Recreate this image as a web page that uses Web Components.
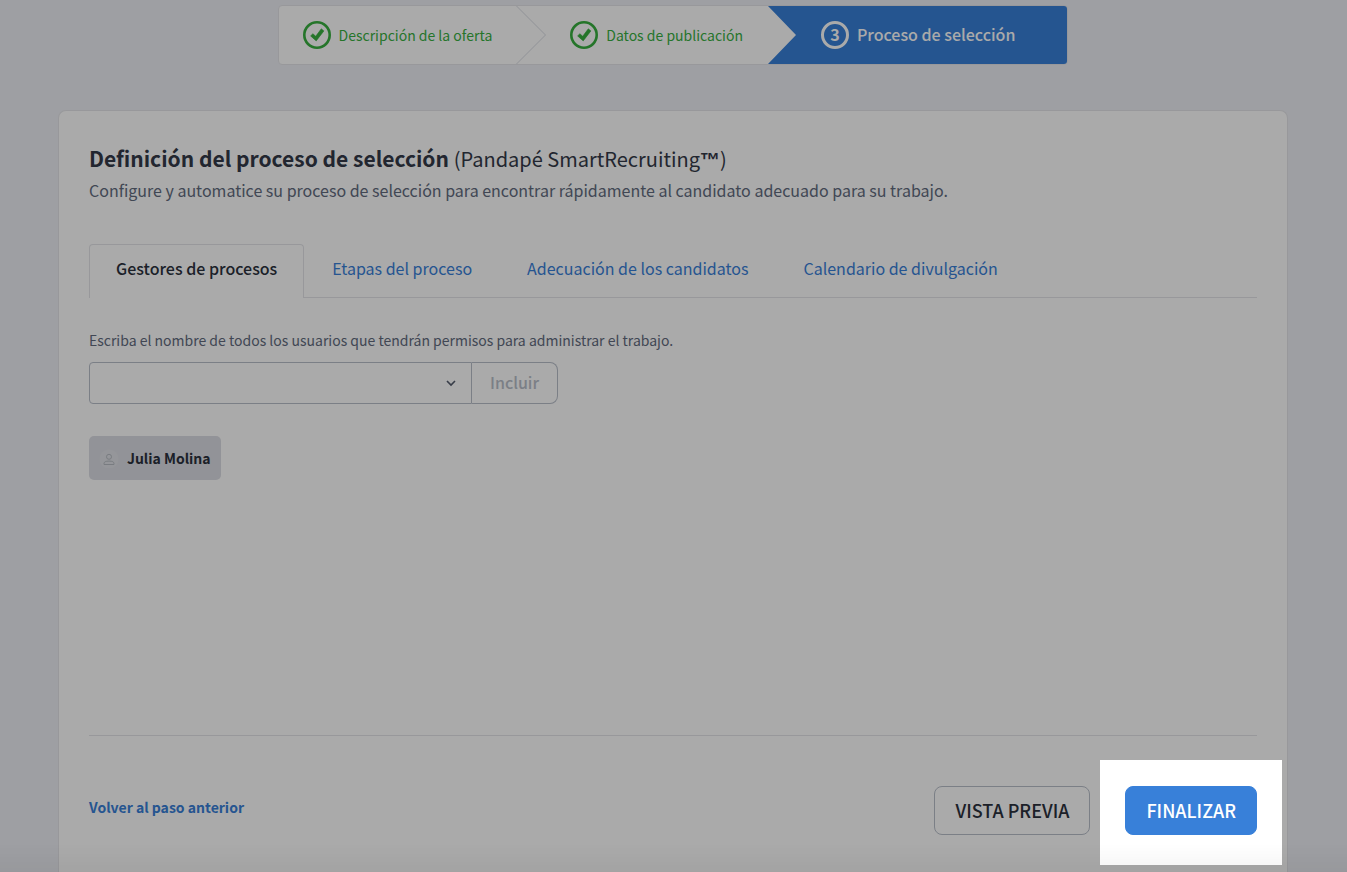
<!DOCTYPE html>
<html lang="es">
<head>
<meta charset="utf-8">
<meta name="viewport" content="width=device-width, initial-scale=1">
<title>Proceso de selección</title>
<style>
    body{
        margin:0;
        font-family:"Noto Sans CJK JP", "Noto Sans", sans-serif;
        font-size:14px;
        line-height:24px;
        color:#343a48;
        --blue:#3880d9;
        --green:#38b03f;
        --grey:#626b7e;
        --line:#e4e5e9;
        --field:#b9bfca;
        background-color:#eeeff5;
    }

    .trademark{
        font-family:"Liberation Sans", sans-serif;
        font-weight:700;
        line-height:1;
    }
</style>
</head>
<body>

<publish-page>
    <step-bar slot="steps">
        <step-item state="done">Descripción de la oferta</step-item>
        <step-item state="done" before-current>Datos de publicación</step-item>
        <step-item state="current" number="3">Proceso de selección</step-item>
    </step-bar>

    <process-card>
        <span slot="title">Definición del proceso de selección</span>
        <span slot="product">(Pandapé SmartRecruiting<span class="trademark">™</span>)</span>
        <span slot="intro">Configure y automatice su proceso de selección para encontrar rápidamente al candidato adecuado para su trabajo.</span>

        <tab-bar>
            <tab-item active>Gestores de procesos</tab-item>
            <tab-item>Etapas del proceso</tab-item>
            <tab-item>Adecuación de los candidatos</tab-item>
            <tab-item>Calendario de divulgación</tab-item>
        </tab-bar>
        <user-picker></user-picker>
        <user-chip>Julia Molina</user-chip>

        <card-actions slot="footer"></card-actions>
    </process-card>
</publish-page>

<script>
class PublishPage extends HTMLElement {

    constructor() {
        super();
        this.attachShadow({mode: 'open'});
        this.render();
    }

    render() {
        this.shadowRoot.innerHTML =
        /*html*/
        `
        <style>
            :host{
                display:flex;
                flex-direction:column;
                gap:45px;
                min-height:100vh;
                box-sizing:border-box;
                padding:5px 59px 0 58px;
            }

            main{
                flex:1;
                display:flex;
                flex-direction:column;
            }

            /* soft shade along the bottom of the window */
            .shade{
                position:fixed;
                left:0;
                right:0;
                bottom:0;
                height:28px;
                z-index:3;
                pointer-events:none;
                background:linear-gradient(rgba(0, 0, 0, 0), rgba(0, 0, 0, 0.04));
            }
        </style>

        <slot name="steps"></slot>
        <main><slot></slot></main>
        <div class="shade"></div>
        `;
    }
}

class StepBar extends HTMLElement {

    constructor() {
        super();
        this.attachShadow({mode: 'open'});
        this.render();
    }

    render() {
        this.shadowRoot.innerHTML =
        /*html*/
        `
        <style>
            :host{
                display:flex;
                justify-content:center;
            }

            nav{
                display:flex;
                height:58px;
                background-color:white;
                border:1px solid var(--line);
                border-radius:4px;
                overflow:hidden;
            }
        </style>

        <nav aria-label="Pasos"><slot></slot></nav>
        `;
    }
}

class StepItem extends HTMLElement {

    constructor() {
        super();
        this.attachShadow({mode: 'open'});
    }

    connectedCallback() {
        this.render();
    }

    icon() {
        if (this.getAttribute("state") === "current") {
            return `<span class="number">${this.getAttribute("number")}</span>`;
        }
        return `
            <svg class="check" viewBox="0 0 28 28" aria-hidden="true">
                <circle cx="14" cy="14" r="12.7" fill="none" stroke="currentColor" stroke-width="2.6"/>
                <path d="M7.6 14.9 L9.9 12.7 L12.7 15.3 L18.3 7.8 L20.9 9.9 L13.2 19.9 Z" fill="currentColor" stroke="currentColor" stroke-width="0.6" stroke-linejoin="round"/>
            </svg>`;
    }

    arrow() {
        if (this.getAttribute("state") === "current") {
            return "";
        }
        if (this.hasAttribute("before-current")) {
            return `
                <svg class="arrow" viewBox="0 0 30 58" preserveAspectRatio="none" aria-hidden="true">
                    <path d="M1 0 H30 V58 H1 L29 29 Z" fill="var(--blue)"/>
                </svg>`;
        }
        return `
            <svg class="arrow" viewBox="0 0 30 58" preserveAspectRatio="none" aria-hidden="true">
                <path d="M0.5 0 L29.5 29 L0.5 58" fill="none" stroke="#d9dce4"/>
            </svg>`;
    }

    render() {
        this.shadowRoot.innerHTML =
        /*html*/
        `
        <style>
            :host{
                display:flex;
                color:var(--green);
            }

            :host([state="current"]){
                background-color:var(--blue);
                color:white;
                font-size:16px;
                font-weight:500;
                padding-right:28px;
            }

            .content{
                display:flex;
                align-items:center;
                gap:8px;
                padding:0 24px;
            }

            :host([state="current"]) .label{
                padding-bottom:2px;
            }

            .check{
                width:28px;
                height:28px;
            }

            .number{
                box-sizing:border-box;
                width:28px;
                height:28px;
                border:3px solid white;
                border-radius:50%;
                text-align:center;
                line-height:20px;
                font-weight:700;
            }

            .arrow{
                width:30px;
                height:100%;
            }
        </style>

        <div class="content">
            ${this.icon()}
            <span class="label"><slot></slot></span>
        </div>
        ${this.arrow()}
        `;
    }
}

class ProcessCard extends HTMLElement {

    constructor() {
        super();
        this.attachShadow({mode: 'open'});
        this.render();
    }

    render() {
        this.shadowRoot.innerHTML =
        /*html*/
        `
        <style>
            :host{
                flex:1;
                display:flex;
                flex-direction:column;
                padding:31px 30px 37px;
                background-color:white;
                border:1px solid var(--line);
                border-bottom:none;
                border-radius:8px 8px 0 0;
            }

            h1{
                margin:0;
                font-size:21px;
                line-height:32px;
                font-weight:700;
            }

            small{
                font-size:20px;
                line-height:1;
                font-weight:400;
            }

            p{
                margin:0 0 38px;
                font-size:16px;
                line-height:32px;
                color:var(--grey);
            }

            .body{
                flex:1;
            }
        </style>

        <h1><slot name="title"></slot> <small><slot name="product"></slot></small></h1>
        <p><slot name="intro"></slot></p>
        <div class="body"><slot></slot></div>
        <slot name="footer"></slot>
        `;
    }
}

class TabBar extends HTMLElement {

    constructor() {
        super();
        this.attachShadow({mode: 'open'});
        this.render();
    }

    render() {
        this.shadowRoot.innerHTML =
        /*html*/
        `
        <style>
            :host{
                display:block;
            }

            nav{
                display:flex;
                gap:1px;
                box-shadow:inset 0 -1px var(--line);
            }
        </style>

        <nav><slot></slot></nav>
        `;
    }
}

class TabItem extends HTMLElement {

    constructor() {
        super();
        this.attachShadow({mode: 'open'});
        this.render();
    }

    render() {
        this.shadowRoot.innerHTML =
        /*html*/
        `
        <style>
            :host{
                display:block;
                font-size:16px;
            }

            a{
                display:block;
                padding:11px 26px 18px;
                border:1px solid transparent;
                border-bottom:none;
                border-radius:4px 4px 0 0;
                color:var(--blue);
                text-decoration:none;
            }

            :host([active]) a{
                border-color:var(--line);
                background-color:white;
                color:#2b303c;
                font-weight:500;
            }
        </style>

        <a href="#"><slot></slot></a>
        `;
    }
}

class UserPicker extends HTMLElement {

    constructor() {
        super();
        this.attachShadow({mode: 'open'});
        this.render();
    }

    render() {
        this.shadowRoot.innerHTML =
        /*html*/
        `
        <style>
            :host{
                display:block;
                margin:30px 0 32px;
            }

            label{
                display:block;
                margin-bottom:10px;
                color:var(--grey);
            }

            .row{
                display:flex;
                height:42px;
                max-width:469px;
            }

            .select{
                flex:1;
                display:grid;
                align-items:center;
            }

            .select > *{
                grid-area:1 / 1;
            }

            select{
                width:100%;
                height:42px;
                padding:0 32px 0 12px;
                appearance:none;
                background-color:white;
                border:1px solid var(--field);
                border-radius:4px 0 0 4px;
                font:inherit;
                color:inherit;
            }

            svg{
                justify-self:end;
                width:12px;
                height:12px;
                margin-right:15px;
                pointer-events:none;
            }

            button{
                padding:0 18px 2px;
                background-color:white;
                border:1px solid var(--field);
                border-left:none;
                border-radius:0 8px 8px 0;
                font:inherit;
                font-size:16px;
                font-weight:500;
                color:var(--field);
            }
        </style>

        <label for="user">Escriba el nombre de todos los usuarios que tendrán permisos para administrar el trabajo.</label>
        <div class="row">
            <div class="select">
                <select id="user"><option></option></select>
                <svg viewBox="0 0 12 12" aria-hidden="true">
                    <path d="M2 4 L6 8 L10 4" fill="none" stroke="#545c6d" stroke-width="1.6"/>
                </svg>
            </div>
            <button type="button" disabled>Incluir</button>
        </div>
        `;
    }
}

class UserChip extends HTMLElement {

    constructor() {
        super();
        this.attachShadow({mode: 'open'});
        this.render();
    }

    render() {
        this.shadowRoot.innerHTML =
        /*html*/
        `
        <style>
            :host{
                display:inline-flex;
                align-items:center;
                gap:8px;
                height:44px;
                padding:0 10px;
                border-radius:5px;
                background-color:#dcdde4;
                color:#2b303c;
                font-weight:700;
            }

            svg{
                width:20px;
                height:20px;
            }
        </style>

        <svg viewBox="0 0 20 20" aria-hidden="true">
            <circle cx="10" cy="11" r="9.5" fill="#e0e2e7"/>
            <g fill="none" stroke="#b6bbc2">
                <circle cx="10" cy="8.8" r="2.5"/>
                <path d="M5 16.5 V15.6 C5 13.8 6.6 13.1 10 13.1 C13.4 13.1 15 13.8 15 15.6 V16.5 Z"/>
            </g>
        </svg>
        <slot></slot>
        `;
    }
}

class CardActions extends HTMLElement {

    constructor() {
        super();
        this.attachShadow({mode: 'open'});
        this.render();
    }

    render() {
        this.shadowRoot.innerHTML =
        /*html*/
        `
        <style>
            :host{
                display:flex;
                justify-content:space-between;
                padding-top:50px;
                border-top:1px solid var(--line);
            }

            a{
                align-self:center;
                padding-bottom:8px;
                color:var(--blue);
                font-weight:700;
                text-decoration:none;
            }

            .buttons{
                display:flex;
                gap:35px;
            }

            button{
                height:49px;
                padding:0 20px 2px;
                border:1px solid var(--field);
                border-radius:8px;
                background-color:white;
                font:inherit;
                font-size:18px;
                font-weight:500;
                color:#2b303c;
                cursor:pointer;
            }

            button.finish{
                border-color:var(--blue);
                background-color:var(--blue);
                color:white;
            }

            .spotlight{
                position:relative;
            }

            /* dims the whole page except the area round the button */
            .spotlight::after{
                content:"";
                position:absolute;
                inset:-26px -25px -30px;
                box-shadow:0 0 0 200vmax rgba(0, 0, 0, 0.333);
                z-index:2;
                pointer-events:none;
            }
        </style>

        <a href="#">Volver al paso anterior</a>
        <div class="buttons">
            <button type="button">VISTA PREVIA</button>
            <div class="spotlight">
                <button type="button" class="finish">FINALIZAR</button>
            </div>
        </div>
        `;
    }
}

customElements.define('publish-page', PublishPage);
customElements.define('step-bar', StepBar);
customElements.define('step-item', StepItem);
customElements.define('process-card', ProcessCard);
customElements.define('tab-bar', TabBar);
customElements.define('tab-item', TabItem);
customElements.define('user-picker', UserPicker);
customElements.define('user-chip', UserChip);
customElements.define('card-actions', CardActions);
</script>
</body>
</html>
